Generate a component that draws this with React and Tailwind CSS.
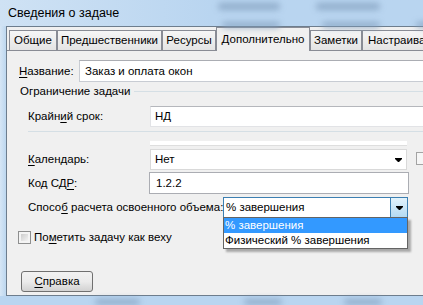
import React from "react";

const U = ({ children }) => (
  <span className="underline underline-offset-[2px] decoration-1">{children}</span>
);

const Arrow = () => (
  <svg width="7" height="4" viewBox="0 0 7 4" className="block">
    <path d="M0 0h7v1L4 4H3L0 1z" fill="#000" />
  </svg>
);

const Blob = ({ className }) => (
  <div className={"absolute rounded-full bg-[#7f9cbb] blur-[3px] opacity-70 " + className} />
);

export default function App() {
  return (
    <div className="w-[423px] h-[305px] overflow-hidden relative bg-[#b9d5f0] flex flex-col font-['Liberation_Sans',Arial,sans-serif] text-[11.5px] text-black leading-[15px]">
      {/* title bar */}
      <div className="h-[26px] shrink-0 relative flex items-center pl-[8px] bg-gradient-to-r from-[#cfe2f4] via-[#b9d5f0] to-[#b9d5f0]">
        <Blob className="left-[218px] top-[3px] w-[62px] h-[7px]" />
        <Blob className="left-[316px] top-[3px] w-[64px] h-[7px]" />
        <Blob className="left-[222px] top-[22px] w-[58px] h-[6px]" />
        <Blob className="left-[322px] top-[22px] w-[58px] h-[6px]" />
        <Blob className="left-[416px] top-[22px] w-[20px] h-[6px]" />
        <span className="relative text-[12.5px]">Сведения о задаче</span>
      </div>

      {/* window row */}
      <div className="h-[270px] shrink-0 flex">
        <div className="w-[6px] shrink-0 bg-gradient-to-r from-[#d6e6f5] to-[#bdd7ef]" />
        <div className="w-[500px] shrink-0 border-l border-t border-b border-[#6d7d8d] bg-[#f0f0f0] flex flex-col">
          {/* tabs */}
          <div className="h-[24px] flex items-end shrink-0">
            <div className="w-[2px] h-px bg-[#898c95]" />
            <div className="w-[48px] h-[21px] border border-[#898c95] bg-gradient-to-b from-[#f6f6f6] to-[#e4e4e4] flex items-center justify-center">Общие</div>
            <div className="w-[105px] h-[21px] border border-[#898c95] bg-gradient-to-b from-[#f6f6f6] to-[#e4e4e4] flex items-center justify-center">Предшественники</div>
            <div className="w-[54px] h-[21px] border border-[#898c95] bg-gradient-to-b from-[#f6f6f6] to-[#e4e4e4] flex items-center justify-center">Ресурсы</div>
            <div className="w-[94px] h-[24px] border-l border-t border-r border-[#898c95] bg-[#f0f0f0] flex items-center justify-center pb-[1px]">Дополнительно</div>
            <div className="w-[52px] h-[21px] border border-[#898c95] bg-gradient-to-b from-[#f6f6f6] to-[#e4e4e4] flex items-center justify-center">Заметки</div>
            <div className="w-[130px] h-[21px] border border-[#898c95] bg-gradient-to-b from-[#f6f6f6] to-[#e4e4e4] flex items-center pl-[5px] whitespace-nowrap">Настраиваемые поля</div>
            <div className="flex-1 h-px bg-[#898c95]" />
          </div>

          {/* panel */}
          <div className="flex flex-col relative">
            {/* name */}
            <div className="mt-[9px] h-[22px] flex items-center">
              <div className="w-[72px] pl-[12px]"><U>Н</U>азвание:</div>
              <div className="w-[400px] h-[22px] border border-[#c8ccd3] border-t-[#abadb3] bg-white pl-[5px] flex items-center">Заказ и оплата окон</div>
            </div>

            {/* group */}
            <div className="mt-[1px] h-[16px] flex items-center pl-[13px]">
              <span className="whitespace-nowrap">Ограничение задачи</span>
              <div className="flex-1 h-px bg-[#d5dfe5] ml-[4px]" />
            </div>

            {/* deadline */}
            <div className="mt-[7px] h-[21px] flex items-center">
              <div className="w-[143px] pl-[21px]">Крайн<U>и</U>й срок:</div>
              <div className="w-[300px] h-[21px] border border-[#e2e3e6] border-t-[#b5b7bc] bg-white pl-[4px] flex items-center">НД</div>
            </div>

            {/* separator */}
            <div className="mt-[4px] h-px ml-[21px] bg-[#d5dfe5]" />

            {/* clipped strip */}
            <div className="mt-[9px] h-[5px] ml-[143px] w-[257px] bg-white border-b border-[#dedede]" />

            {/* calendar */}
            <div className="mt-[3px] h-[21px] flex items-start">
              <div className="w-[143px] pl-[21px] h-[21px] flex items-center"><U>К</U>алендарь:</div>
              <div className="w-[257px] h-[21px] border border-[#d9d9d9] bg-white pl-[4px] pr-[4px] flex items-center justify-between">
                <span>Нет</span>
                <Arrow />
              </div>
              <div className="ml-[9px] mt-[3px] w-[14px] h-[13px] border border-[#a3a3a3] bg-[#f6f6f6]" />
            </div>

            {/* code */}
            <div className="mt-[2px] h-[22px] flex items-center">
              <div className="w-[142px] pl-[21px]">Код СД<U>Р</U>:</div>
              <div className="w-[260px] h-[22px] border border-[#abadb3] bg-white pl-[6px] flex items-center">1.2.2</div>
            </div>

            {/* method */}
            <div className="mt-[3px] h-[21px] flex items-center">
              <div className="w-[216px] pl-[21px] whitespace-nowrap">Спосо<U>б</U> расчета освоенного объема:</div>
              <div className="w-[185px] h-[21px] border border-[#3c7fb1] bg-white flex items-stretch relative">
                <div className="flex-1 pl-[2px] flex items-center">% завершения</div>
                <div className="w-[17px] border-l border-[#3c7fb1] bg-gradient-to-b from-[#e3f3fc] to-[#b3daf2] flex items-center justify-center">
                  <Arrow />
                </div>
                <div className="absolute left-[-1px] top-[19px] w-[185px] h-[32px] border border-[#646464] bg-white z-10 shadow-[3px_3px_2px_rgba(0,0,0,0.3)] flex flex-col">
                  <div className="h-[15px] bg-[#3399ff] text-white pl-[1px] flex items-center leading-[15px]">% завершения</div>
                  <div className="h-[15px] pl-[1px] flex items-center leading-[15px]">Физический % завершения</div>
                </div>
              </div>
            </div>

            {/* checkbox */}
            <div className="mt-[13px] h-[13px] flex items-center pl-[11px]">
              <div className="w-[13px] h-[13px] border border-[#8e8f8f] p-[2px] bg-[#f4f4f4] shrink-0">
                <div className="w-full h-full bg-gradient-to-br from-[#cdcdcd] to-[#f3f3f3]" />
              </div>
              <span className="ml-[3px] whitespace-nowrap">По<U>м</U>етить задачу как веху</span>
            </div>

            {/* button */}
            <div className="mt-[27px] ml-[14px] w-[72px] h-[21px] rounded-[3px] border border-[#707070] bg-gradient-to-b from-[#f2f2f2] via-[#ebebeb] to-[#d2d2d2] flex items-center justify-center">
              <span><U>С</U>правка</span>
            </div>
          </div>
        </div>
      </div>

      {/* bottom */}
      <div className="flex-1 relative">
        <Blob className="left-[95px] top-[3px] w-[45px] h-[6px]" />
        <Blob className="left-[244px] top-[3px] w-[38px] h-[6px]" />
        <Blob className="left-[344px] top-[3px] w-[38px] h-[6px]" />
      </div>
    </div>
  );
}
